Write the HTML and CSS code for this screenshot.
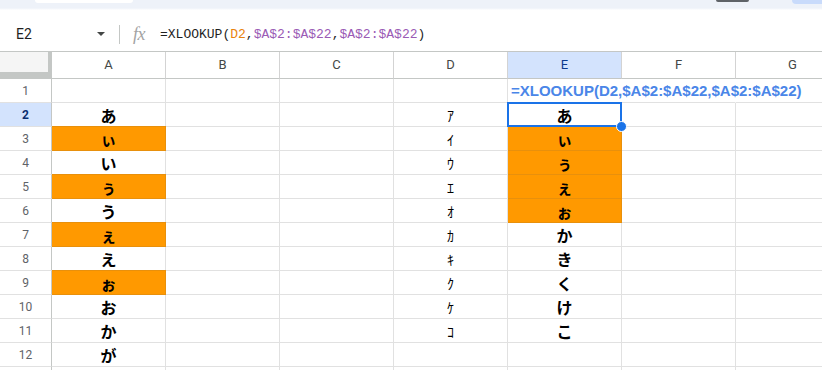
FILE: index.html
```html
<!DOCTYPE html>
<html lang="ja">
<head>
<meta charset="utf-8">
<title>Sheet</title>
<link rel="stylesheet" href="styles.css">
</head>
<body>
<div class="app">
  <div class="topbar">
    <div class="tb-search"></div>
    <div class="tb-dark"></div>
    <div class="tb-blue"></div>
  </div>
  <div class="formulabar">
    <div class="namebox"><span class="name">E2</span><span class="caret"></span></div>
    <div class="sep"></div>
    <div class="fx">fx</div>
    <div class="formula">=XLOOKUP(<span class="ref1">D2</span>,<span class="ref2">$A$2:$A$22</span>,<span class="ref2">$A$2:$A$22</span>)</div>
  </div>
  <table class="grid">
    <colgroup>
      <col class="c-rh"><col class="c"><col class="c"><col class="c"><col class="c"><col class="c"><col class="c"><col class="c">
    </colgroup>
    <tr class="hdr">
      <th class="corner"></th>
      <th class="ch">A</th><th class="ch">B</th><th class="ch">C</th><th class="ch">D</th><th class="ch ch-sel">E</th><th class="ch">F</th><th class="ch">G</th>
    </tr>
    <tr>
      <th class="rh">1</th>
      <td></td><td></td><td></td><td></td><td class="formula-txt nob">=XLOOKUP(D2,$A$2:$A$22,$A$2:$A$22)</td><td class="nob"></td><td></td>
    </tr>
    <tr>
      <th class="rh rh-sel">2</th>
      <td class="jp">あ</td><td></td><td></td><td class="kana">ｱ</td><td class="jp sel-cell">あ<div class="sel"></div><div class="handle"></div></td><td></td><td></td>
    </tr>
    <tr>
      <th class="rh">3</th>
      <td class="jp org">ぃ</td><td></td><td></td><td class="kana">ｲ</td><td class="jp org">ぃ</td><td></td><td></td>
    </tr>
    <tr>
      <th class="rh">4</th>
      <td class="jp">い</td><td></td><td></td><td class="kana">ｳ</td><td class="jp org">ぅ</td><td></td><td></td>
    </tr>
    <tr>
      <th class="rh">5</th>
      <td class="jp org">ぅ</td><td></td><td></td><td class="kana">ｴ</td><td class="jp org">ぇ</td><td></td><td></td>
    </tr>
    <tr>
      <th class="rh">6</th>
      <td class="jp">う</td><td></td><td></td><td class="kana">ｵ</td><td class="jp org">ぉ</td><td></td><td></td>
    </tr>
    <tr>
      <th class="rh">7</th>
      <td class="jp org">ぇ</td><td></td><td></td><td class="kana">ｶ</td><td class="jp">か</td><td></td><td></td>
    </tr>
    <tr>
      <th class="rh">8</th>
      <td class="jp">え</td><td></td><td></td><td class="kana">ｷ</td><td class="jp">き</td><td></td><td></td>
    </tr>
    <tr>
      <th class="rh">9</th>
      <td class="jp org">ぉ</td><td></td><td></td><td class="kana">ｸ</td><td class="jp">く</td><td></td><td></td>
    </tr>
    <tr>
      <th class="rh">10</th>
      <td class="jp">お</td><td></td><td></td><td class="kana">ｹ</td><td class="jp">け</td><td></td><td></td>
    </tr>
    <tr>
      <th class="rh">11</th>
      <td class="jp">か</td><td></td><td></td><td class="kana">ｺ</td><td class="jp">こ</td><td></td><td></td>
    </tr>
    <tr>
      <th class="rh">12</th>
      <td class="jp">が</td><td></td><td></td><td></td><td></td><td></td><td></td>
    </tr>
    <tr>
      <th class="rh"></th>
      <td></td><td></td><td></td><td></td><td></td><td></td><td></td>
    </tr>
  </table>
</div>
</body>
</html>
```

FILE: styles.css
```css
html, body {
  margin: 0;
  padding: 0;
  width: 822px;
  height: 370px;
  overflow: hidden;
  background: #ffffff;
}

.app {
  width: 822px;
  height: 370px;
  overflow: hidden;
  font-family: Roboto, "Noto Sans", sans-serif;
}

/* top strip */
.topbar {
  height: 10px;
  background: linear-gradient(#eef2f9 0, #eef2f9 8px, #f6f8fc 9px, #ffffff 10px);
  display: flex;
  align-items: flex-start;
}
.tb-search {
  margin-left: 35px;
  width: 98px;
  height: 3px;
  background: #ffffff;
  border-radius: 0 0 6px 6px;
}
.tb-dark {
  margin-left: auto;
  width: 33px;
  height: 2px;
  background: #5f6368;
  border-radius: 0 0 2px 2px;
}
.tb-blue {
  margin-left: 43px;
  width: 30px;
  height: 4px;
  background: #c9dbfb;
  border-radius: 0 0 0 8px;
}

/* formula bar */
.formulabar {
  height: 41px;
  box-sizing: content-box;
  border-bottom: 1px solid #c4c7c5;
  display: flex;
  align-items: center;
}
.namebox {
  width: 112px;
  box-sizing: border-box;
  padding: 7px 7px 0 16px;
  display: flex;
  align-items: center;
  justify-content: space-between;
}
.name {
  font-size: 14px;
  color: #1f1f1f;
}
.caret {
  width: 0;
  height: 0;
  border-left: 4px solid transparent;
  border-right: 4px solid transparent;
  border-top: 4px solid #444746;
}
.sep {
  margin-left: 7px;
  margin-top: 7px;
  width: 1px;
  height: 19px;
  background: #c4c7c5;
}
.fx {
  margin-left: 13px;
  width: 27px;
  margin-top: 7px;
  font-family: "Liberation Serif", serif;
  font-style: italic;
  font-size: 18px;
  line-height: 18px;
  color: #a3a3a3;
  letter-spacing: -0.5px;
}
.formula {
  margin-top: 7px;
  font-family: "Liberation Mono", monospace;
  font-size: 13px;
  color: #1f1f1f;
  white-space: nowrap;
}
.ref1 { color: #e8830c; }
.ref2 { color: #9a5bb5; }

/* grid */
.grid {
  table-layout: fixed;
  width: 850px;
  border-collapse: separate;
  border-spacing: 0;
}
.c-rh { width: 52px; }
.c { width: 114px; }

.grid th, .grid td {
  box-sizing: border-box;
  padding: 0;
  height: 24px;
  line-height: 20px;
  border-right: 1px solid #e1e1e1;
  border-bottom: 1px solid #e1e1e1;
  vertical-align: middle;
  overflow: visible;
}

.hdr th {
  height: 27px;
  font-weight: normal;
  font-size: 13px;
  color: #444746;
  background: #ffffff;
  border-right-color: #d3d3d3;
  border-bottom-color: #c4c7c5;
  text-align: center;
}
.hdr .corner {
  background: #f5f5f5;
  border-right-color: #c4c7c5;
  border-bottom-color: #c4c7c5;
  box-shadow: inset -3px -6px 0 #c4c7c5;
}
.hdr .ch-sel {
  background: #d3e3fd;
  color: #0b3a8c;
}

.rh {
  font-weight: normal;
  font-size: 12px;
  color: #5f6368;
  text-align: center;
  background: #ffffff;
  border-right-color: #c4c7c5 !important;
}
.rh-sel {
  background: #d3e3fd;
  color: #0b2f6e;
  font-weight: bold;
}

.jp {
  font-family: "Noto Sans CJK JP", sans-serif;
  font-weight: bold;
  font-size: 16px;
  color: #000000;
  text-align: center;
}
.kana {
  font-family: "Noto Sans CJK JP", sans-serif;
  font-weight: normal;
  font-size: 14px;
  color: #000000;
  text-align: center;
}
.org {
  background: #ff9900;
  border-right-color: #e8900c !important;
  border-bottom-color: #e8900c !important;
  box-shadow: 0 -1px 0 #e8900c;
}

.formula-txt {
  font-family: "Liberation Sans", Arial, sans-serif;
  font-weight: bold;
  font-size: 15px;
  color: #4a86e8;
  white-space: nowrap;
  padding-left: 3px !important;
  text-align: left;
}
.nob {
  border-right-color: transparent !important;
}

.sel-cell {
  position: relative;
}
.sel {
  position: absolute;
  left: -1px;
  top: -1px;
  width: 115px;
  height: 25px;
  box-sizing: border-box;
  border: 2px solid #1a73e8;
}
.handle {
  position: absolute;
  left: 108px;
  top: 18px;
  width: 9px;
  height: 9px;
  border-radius: 50%;
  background: #1a73e8;
  border: 1px solid #ffffff;
}
```
